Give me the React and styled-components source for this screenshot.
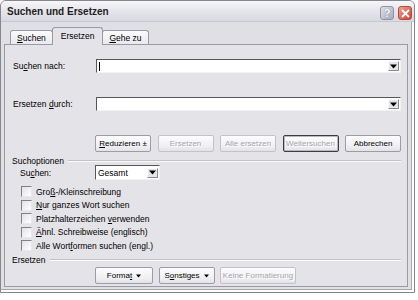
import React from "react";
import styled, { createGlobalStyle } from "styled-components";

const GlobalStyle = createGlobalStyle`
  body {
    margin: 0;
    background: #ffffff;
    font-family: "Liberation Sans", Arial, sans-serif;
  }
`;

const DownArrow = ({ size = 7 }) => (
  <svg width={size} height={Math.ceil(size / 2) + 1} viewBox="0 0 7 4">
    <path d="M0 0 H7 L3.5 4 Z" fill="#000" />
  </svg>
);

const TABS = [
  { key: "S", rest: "uchen" },
  { key: "", rest: "Ersetzen", active: true },
  { key: "G", rest: "ehe zu" },
];

const OPTIONS = [
  ["Gro", "ß", "-/Kleinschreibung"],
  ["", "N", "ur ganzes Wort suchen"],
  ["Platzhalterzeichen ", "v", "erwenden"],
  ["", "Ä", "hnl. Schreibweise (englisch)"],
  ["Alle Wort", "f", "ormen suchen (engl.)"],
];

const App = () => {
  return (
    <>
      <GlobalStyle />
      <Window>
        <TitleBar>
          <Title>Suchen und Ersetzen</Title>
          <TitleButtons>
            <HelpButton>?</HelpButton>
            <CloseButton>
              <svg width="9" height="9" viewBox="0 0 9 9">
                <path d="M1 1 L8 8 M8 1 L1 8" stroke="#fff" strokeWidth="1.8" />
              </svg>
            </CloseButton>
          </TitleButtons>
        </TitleBar>

        <Body>
          <TabStrip>
            {TABS.map((t) => (
              <Tab key={t.rest} $active={t.active}>
                <span>
                  <Key>{t.key}</Key>
                  {t.rest}
                </span>
              </Tab>
            ))}
          </TabStrip>

          <Panel>
            <FieldRow>
              <Label>
                Su<Key>c</Key>hen nach:
              </Label>
              <Combo>
                <Caret />
                <ArrowBox>
                  <DownArrow />
                </ArrowBox>
              </Combo>
            </FieldRow>

            <FieldRow $gap={24}>
              <Label>
                Ersetzen <Key>d</Key>urch:
              </Label>
              <Combo>
                <ArrowBox>
                  <DownArrow />
                </ArrowBox>
              </Combo>
            </FieldRow>

            <ActionRow>
              <Button>
                <span>
                  <Key>R</Key>eduzieren ±
                </span>
              </Button>
              <Button disabled>
                <span>Ersetzen</span>
              </Button>
              <Button disabled>
                <span>Alle ersetzen</span>
              </Button>
              <Button disabled $default>
                <span>Weitersuchen</span>
              </Button>
              <Button>
                <span>Abbrechen</span>
              </Button>
            </ActionRow>

            <GroupHeader $gap={4}>
              <span>Suchoptionen</span>
              <Rule />
            </GroupHeader>

            <SelectRow>
              <SubLabel>
                Su<Key>c</Key>hen:
              </SubLabel>
              <Select>
                <span>Gesamt</span>
                <ArrowBox>
                  <DownArrow />
                </ArrowBox>
              </Select>
            </SelectRow>

            <OptionList>
              {OPTIONS.map(([a, k, b]) => (
                <Option key={a + k + b}>
                  <CheckBox />
                  <span>
                    {a}
                    <Key>{k}</Key>
                    {b}
                  </span>
                </Option>
              ))}
            </OptionList>

            <GroupHeader $gap={3}>
              <span>Ersetzen</span>
              <Rule />
            </GroupHeader>

            <BottomRow>
              <Button $width={58}>
                <span>
                  Forma<Key>t</Key>
                </span>
                <DownArrow size={5} />
              </Button>
              <Button $width={56}>
                <span>
                  S<Key>o</Key>nstiges
                </span>
                <DownArrow size={5} />
              </Button>
              <Button $width={76} disabled>
                <span>Keine Formatierung</span>
              </Button>
            </BottomRow>
          </Panel>
        </Body>
      </Window>
    </>
  );
};

const Window = styled.div`
  width: 415px;
  height: 293px;
  box-sizing: border-box;
  border: 1px solid #86868e;
  border-radius: 6px 6px 0 0;
  background: #e0dfe3;
  box-shadow: inset -2px -2px 0 #ffffff, inset -3px -3px 0 #a8a8b0;
  display: flex;
  flex-direction: column;
  overflow: hidden;
  color: #000;
  font-size: 8.5px;
`;

const TitleBar = styled.div`
  height: 20px;
  flex: none;
  display: flex;
  align-items: center;
  justify-content: space-between;
  padding: 0 2px 0 6px;
  background: linear-gradient(#f7f7fa 0%, #e6e6ec 45%, #d9d9e1 100%);
  border-bottom: 1px solid #c8c8d0;
`;

const Title = styled.div`
  font-size: 10px;
  font-weight: bold;
  color: #1e1e24;
  padding-top: 1px;
`;

const TitleButtons = styled.div`
  display: flex;
  gap: 4px;
  padding-top: 4px;
`;

const TitleButton = styled.div`
  width: 14px;
  height: 14px;
  box-sizing: border-box;
  border-radius: 3px;
  display: flex;
  align-items: center;
  justify-content: center;
`;

const HelpButton = styled(TitleButton)`
  background: linear-gradient(135deg, #dfe1ea, #a6aabd);
  border: 1px solid #8f93a6;
  color: #ffffff;
  font-size: 11px;
  font-weight: bold;
  text-shadow: 0 0 1px #555a6c;
`;

const CloseButton = styled(TitleButton)`
  background: linear-gradient(135deg, #eba497, #c9452f);
  border: 1px solid #b24a3a;
`;

const Body = styled.div`
  flex: 1;
  display: flex;
  flex-direction: column;
  padding: 0 6px 5px 3px;
`;

const TabStrip = styled.div`
  height: 22px;
  flex: none;
  display: flex;
  align-items: flex-end;
  padding-left: 6px;
`;

const Tab = styled.div`
  position: relative;
  box-sizing: border-box;
  height: ${(p) => (p.$active ? "18px" : "14px")};
  margin: ${(p) => (p.$active ? "0 -1px -1px" : "0")};
  padding: ${(p) => (p.$active ? "3px 8px 0" : "0 6px")};
  z-index: ${(p) => (p.$active ? 1 : 0)};
  border: 1px solid #9a9aa4;
  border-bottom: none;
  border-radius: 3px 3px 0 0;
  background: ${(p) =>
    p.$active ? "#e4e3e8" : "linear-gradient(#fbfbfc, #e9e9ee)"};
  display: flex;
  align-items: ${(p) => (p.$active ? "flex-start" : "center")};
  white-space: nowrap;
`;

const Key = styled.span`
  text-decoration: underline;
`;

const Panel = styled.div`
  flex: 1;
  box-sizing: border-box;
  border: 1px solid #9a9aa4;
  background: #e4e3e8;
  padding: 14px 6px 0 8px;
  display: flex;
  flex-direction: column;
`;

const FieldRow = styled.div`
  display: flex;
  align-items: center;
  height: 14px;
  margin-top: ${(p) => (p.$gap ? `${p.$gap}px` : "0")};
`;

const Label = styled.div`
  width: 83px;
  flex: none;
  white-space: nowrap;
`;

const Combo = styled.div`
  flex: 1;
  height: 14px;
  box-sizing: border-box;
  background: #ffffff;
  border: 1px solid;
  border-color: #55555c #f2f2f4 #f2f2f4 #55555c;
  display: flex;
  align-items: center;
  padding: 0 1px;
`;

const Caret = styled.div`
  width: 1px;
  height: 9px;
  background: #000;
  margin-left: 1px;
`;

const ArrowBox = styled.div`
  margin-left: auto;
  width: 11px;
  height: 10px;
  box-sizing: border-box;
  background: #e6e5ea;
  border: 1px solid;
  border-color: #fbfbfb #8a8a92 #8a8a92 #fbfbfb;
  display: flex;
  align-items: center;
  justify-content: center;
`;

const ActionRow = styled.div`
  display: flex;
  justify-content: space-between;
  margin: 24px 0 0 82px;
  width: 306px;
`;

const Button = styled.div`
  width: ${(p) => (p.$width ? `${p.$width}px` : "56px")};
  height: 17px;
  box-sizing: border-box;
  display: flex;
  align-items: center;
  justify-content: center;
  gap: 4px;
  font-size: 8px;
  white-space: nowrap;
  border-radius: 2px;
  background: linear-gradient(#fdfdfe, #efeff2 70%, #e2e2e7);
  border: 1px solid
    ${(p) => (p.$default ? "#3c3c44" : p.disabled ? "#c2c2c8" : "#9c9ca6")};
  box-shadow: ${(p) => (p.$default ? "inset 0 0 0 1px #b9b9c2" : "none")};
  color: ${(p) => (p.disabled ? "#a4a4aa" : "#000")};
  text-shadow: ${(p) => (p.disabled ? "1px 1px 0 #ffffff" : "none")};
`;

const GroupHeader = styled.div`
  display: flex;
  align-items: center;
  gap: 4px;
  height: 9px;
  margin: ${(p) => `${p.$gap}px`} 0 0 -1px;
`;

const Rule = styled.div`
  flex: 1;
  border-top: 1px solid #c2c2c9;
  border-bottom: 1px solid #fbfbfc;
`;

const SelectRow = styled.div`
  display: flex;
  align-items: center;
  height: 15px;
`;

const SubLabel = styled.div`
  width: 75px;
  padding-left: 7px;
  flex: none;
`;

const Select = styled.div`
  width: 65px;
  height: 15px;
  box-sizing: border-box;
  background: #ffffff;
  border: 1px solid;
  border-color: #55555c #f2f2f4 #f2f2f4 #55555c;
  display: flex;
  align-items: center;
  padding: 0 1px 0 2px;
`;

const OptionList = styled.div`
  display: flex;
  flex-direction: column;
  margin-top: 5px;
  padding-left: 8px;
`;

const Option = styled.div`
  height: 13.5px;
  display: flex;
  align-items: center;
  gap: 4px;
  white-space: nowrap;
`;

const CheckBox = styled.div`
  width: 11px;
  height: 11px;
  box-sizing: border-box;
  border: 1px solid;
  border-color: #808088 #e8e8ec #e8e8ec #808088;
  background: linear-gradient(135deg, #e2e2e2, #ffffff);
`;

const BottomRow = styled.div`
  display: flex;
  gap: 5.5px;
  margin: 2.5px 0 0 82px;
`;

export default App;
